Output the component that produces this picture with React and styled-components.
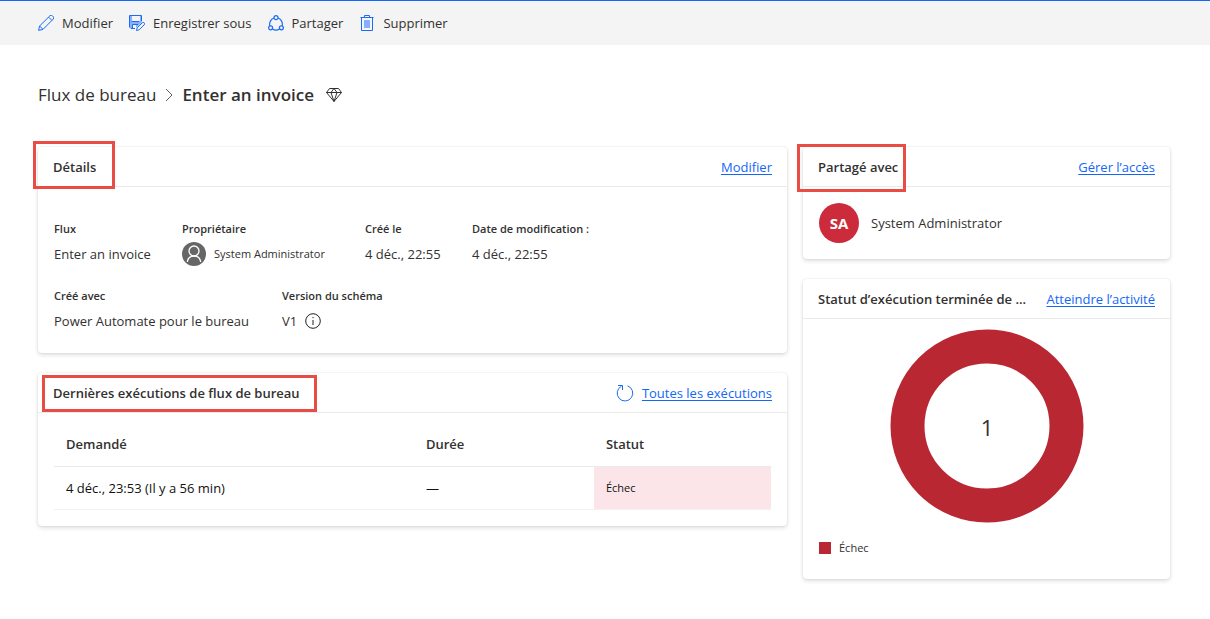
import React from "react";
import styled, { createGlobalStyle } from "styled-components";

const GlobalStyle = createGlobalStyle`
  *, *::before, *::after { box-sizing: border-box; }
  body {
    margin: 0;
    background: #fff;
    color: #323130;
    font-family: "Open Sans", "Noto Sans", sans-serif;
    font-size: 13px;
    line-height: 20px;
  }
`;

const Toolbar = styled.nav`
  display: flex;
  flex-wrap: wrap;
  align-items: center;
  gap: 16px;
  min-height: 45px;
  padding: 0 38px;
  border-top: 1px solid #1267f6;
  background: #f4f4f4;
`;

const ToolButton = styled.button`
  display: flex;
  align-items: center;
  gap: 8px;
  padding: 0;
  border: 0;
  background: none;
  color: inherit;
  font: inherit;
  cursor: pointer;
`;

const Icon = styled.svg`
  flex: none;
  width: ${(p) => p.$size || 16}px;
  height: ${(p) => p.$size || 16}px;
  fill: none;
  stroke: ${(p) => p.$color || "#1b6bf5"};
  stroke-linejoin: round;
`;

const Page = styled.main`
  padding: 36px 40px 40px 38px;
`;

const Breadcrumb = styled.div`
  display: flex;
  align-items: center;
  font-size: 17px;
  line-height: 28px;
`;

const Crumb = styled.a`
  color: inherit;
  text-decoration: none;
`;

const PageTitle = styled.h1`
  margin: 0 12px 0 0;
  font-size: inherit;
  font-weight: 600;
`;

const Separator = styled(Icon)`
  margin: 0 6px;
`;

const Columns = styled.div`
  display: grid;
  grid-template-columns: minmax(0, 749fr) minmax(0, 367fr);
  align-items: start;
  gap: 16px;
  margin-top: 38px;
`;

const Column = styled.div`
  display: grid;
  grid-template-columns: minmax(0, 1fr);
  gap: 20px;
`;

const Card = styled.section`
  position: relative;
  border-radius: 4px;
  background: #fff;
  box-shadow: 0 2px 4px rgba(0, 0, 0, 0.13), 0 0 2px rgba(0, 0, 0, 0.11);
`;

const CardHeader = styled.header`
  display: flex;
  align-items: center;
  justify-content: space-between;
  gap: 12px;
  height: 40px;
  padding: 0 15px;
  border-bottom: 1px solid #eaeaea;
`;

const CardTitle = styled.h2`
  min-width: 0;
  margin: 0;
  overflow: hidden;
  font-size: 13px;
  font-weight: 600;
  white-space: nowrap;
  text-overflow: ellipsis;
`;

const Link = styled.a`
  flex: none;
  color: #1267f6;
  text-decoration: underline;
  text-underline-offset: 2px;
`;

const HeaderActions = styled.div`
  display: flex;
  align-items: center;
  gap: 8px;
`;

const IconButton = styled.button`
  display: flex;
  padding: 0;
  border: 0;
  background: none;
  cursor: pointer;
`;

const Highlight = styled.div`
  position: absolute;
  top: ${(p) => p.$top}px;
  left: ${(p) => p.$left}px;
  width: ${(p) => p.$width}px;
  height: ${(p) => p.$height}px;
  border: 3px solid #e94b45;
  pointer-events: none;
`;

const Details = styled.div`
  display: grid;
  gap: 20px;
  padding: 32px 16px 20px;
`;

const FieldRow = styled.dl`
  display: flex;
  flex-wrap: wrap;
  gap: 16px 30px;
  margin: 0;
`;

const Field = styled.div`
  min-width: ${(p) => p.$width || 0}px;
`;

const FieldLabel = styled.dt`
  font-size: 11px;
  font-weight: 600;
`;

const FieldValue = styled.dd`
  display: flex;
  align-items: center;
  gap: 8px;
  min-height: 27px;
  margin: 0;
  padding-top: 3px;
`;

const SmallText = styled.span`
  font-size: 11px;
`;

const TableWrap = styled.div`
  padding: 9px 16px 16px;
`;

const Table = styled.table`
  width: 100%;
  border-collapse: collapse;
  table-layout: fixed;
`;

const HeadCell = styled.th`
  width: ${(p) => p.$width};
  height: 44px;
  padding: 0 12px;
  border-bottom: 1px solid #eaeaea;
  font-weight: 600;
  text-align: left;
`;

const Cell = styled.td`
  height: 43px;
  padding: 0 12px;
  border-bottom: 1px solid #f3f2f1;
  background: ${(p) => (p.$failed ? "#fbe5e8" : "none")};
  color: #111;
  font-size: ${(p) => (p.$failed ? 11 : 13)}px;
`;

const Person = styled.div`
  display: flex;
  align-items: center;
  gap: 12px;
  padding: 16px;
`;

const Avatar = styled.span`
  display: flex;
  align-items: center;
  justify-content: center;
  width: 40px;
  height: 40px;
  border-radius: 50%;
  background: #cc2b3b;
  color: #fff;
  font-size: 15px;
  font-weight: 700;
`;

const Chart = styled.svg`
  display: block;
  width: 194px;
  height: 194px;
  margin: 10px auto 0;
`;

const ChartValue = styled.text`
  fill: #323130;
  font-size: 22px;
  text-anchor: middle;
`;

const Legend = styled.div`
  display: flex;
  align-items: center;
  gap: 8px;
  padding: 15px 16px 21px;
  font-size: 11px;
`;

const Swatch = styled.span`
  width: 12px;
  height: 12px;
  background: #b92733;
`;

const PencilIcon = () => (
  <Icon viewBox="0 0 16 16" aria-hidden="true">
    <path d="M.6 15.4 1.6 11 11.8.9a1.8 1.8 0 0 1 2.7 0l.6.6a1.8 1.8 0 0 1 0 2.7L5 14.4zM10.6 2.1l3.3 3.3M1.6 11l3.4 3.4" />
  </Icon>
);

const SaveAsIcon = () => (
  <Icon viewBox="0 0 16 16" aria-hidden="true">
    <path d="M1 1h2v6h8V1h2v6L7 13V10H4v3H2l-1-1z" fill="#86b0fb" stroke="none" />
    <path d="M6 13.5H2L.5 12V.5h12V6M2.500 6.500h8M3.500 13V9.500H9" />
    <path d="m7.500 15.500.7-2.700 5-5a1.200 1.200 0 0 1 2 2l-5 5z" fill="#f4f4f4" />
  </Icon>
);

const ShareIcon = () => (
  <Icon viewBox="0 0 16 16" strokeWidth="1.200" aria-hidden="true">
    <circle cx="8" cy="2.700" r="2" />
    <circle cx="2.600" cy="12.800" r="2" />
    <circle cx="13.400" cy="12.800" r="2" />
    <path d="M6 3A6.700 6.700 0 0 0 1.800 10.800M10 3a6.700 6.700 0 0 1 4.200 7.800M4.400 14a6.700 6.700 0 0 0 7.200 0" />
  </Icon>
);

const TrashIcon = () => (
  <Icon viewBox="0 0 16 16" aria-hidden="true">
    <path d="M5 5h6v8H5z" fill="#86b0fb" stroke="none" />
    <path d="M1.500 2.500h13M5.500 2.500v-2h5v2M2.500 2.500v13h11v-13" />
  </Icon>
);

const DiamondIcon = () => (
  <Icon viewBox="0 0 16 16" $color="#323130" aria-hidden="true">
    <path d="M3.500 1.500h9l3 4L8 14.500.5 5.500zM.5 5.500h15M8 1.500l-3 4 3 9 3-9z" />
  </Icon>
);

const UserIcon = () => (
  <Icon viewBox="0 0 24 24" $size={24} $color="#fff" aria-hidden="true">
    <circle cx="12" cy="12" r="12" fill="#666" stroke="none" />
    <circle cx="12" cy="9" r="5" strokeWidth="1.300" />
    <path d="M5.300 20c.5-3.500 3.200-6 6.700-6s6.200 2.500 6.700 6" strokeWidth="1.300" />
  </Icon>
);

const InfoIcon = () => (
  <Icon viewBox="0 0 16 16" $color="#222" aria-hidden="true">
    <circle cx="8" cy="8" r="7.300" />
    <path d="M8 7v5M8 4v1.200" />
  </Icon>
);

const RefreshIcon = () => (
  <Icon viewBox="0 0 18 18" $size={18} aria-hidden="true">
    <path d="M11.500 1.800A7.800 7.800 0 1 1 5.500 2.200M2 1.500h4.500V6" />
  </Icon>
);

export default function App() {
  return (
    <>
      <GlobalStyle />
      <Toolbar aria-label="Actions">
        <ToolButton><PencilIcon />Modifier</ToolButton>
        <ToolButton><SaveAsIcon />Enregistrer sous</ToolButton>
        <ToolButton><ShareIcon />Partager</ToolButton>
        <ToolButton><TrashIcon />Supprimer</ToolButton>
      </Toolbar>
      <Page>
        <Breadcrumb>
          <Crumb href="#flux">Flux de bureau</Crumb>
          <Separator viewBox="0 0 14 14" $size={14} $color="#605e5c" aria-hidden="true">
            <path d="m4 1 6 6-6 6" />
          </Separator>
          <PageTitle>Enter an invoice</PageTitle>
          <DiamondIcon />
        </Breadcrumb>
        <Columns>
          <Column>
            <Card>
              <CardHeader>
                <CardTitle>Détails</CardTitle>
                <Link href="#modifier">Modifier</Link>
              </CardHeader>
              <Highlight $top={-6} $left={-5} $width={82} $height={48} />
              <Details>
                <FieldRow>
                  <Field $width={98}>
                    <FieldLabel>Flux</FieldLabel>
                    <FieldValue>Enter an invoice</FieldValue>
                  </Field>
                  <Field $width={153}>
                    <FieldLabel>Propriétaire</FieldLabel>
                    <FieldValue><UserIcon /><SmallText>System Administrator</SmallText></FieldValue>
                  </Field>
                  <Field $width={77}>
                    <FieldLabel>Créé le</FieldLabel>
                    <FieldValue>4 déc., 22:55</FieldValue>
                  </Field>
                  <Field>
                    <FieldLabel>Date de modification :</FieldLabel>
                    <FieldValue>4 déc., 22:55</FieldValue>
                  </Field>
                </FieldRow>
                <FieldRow>
                  <Field $width={198}>
                    <FieldLabel>Créé avec</FieldLabel>
                    <FieldValue>Power Automate pour le bureau</FieldValue>
                  </Field>
                  <Field>
                    <FieldLabel>Version du schéma</FieldLabel>
                    <FieldValue>V1 <InfoIcon /></FieldValue>
                  </Field>
                </FieldRow>
              </Details>
            </Card>
            <Card>
              <CardHeader>
                <CardTitle>Dernières exécutions de flux de bureau</CardTitle>
                <HeaderActions>
                  <IconButton aria-label="Actualiser"><RefreshIcon /></IconButton>
                  <Link href="#executions">Toutes les exécutions</Link>
                </HeaderActions>
              </CardHeader>
              <Highlight $top={2} $left={4} $width={275} $height={37} />
              <TableWrap>
                <Table>
                  <thead>
                    <tr>
                      <HeadCell $width="50.2%">Demandé</HeadCell>
                      <HeadCell $width="25.1%">Durée</HeadCell>
                      <HeadCell $width="24.7%">Statut</HeadCell>
                    </tr>
                  </thead>
                  <tbody>
                    <tr>
                      <Cell>4 déc., 23:53 (Il y a 56 min)</Cell>
                      <Cell>—</Cell>
                      <Cell $failed>Échec</Cell>
                    </tr>
                  </tbody>
                </Table>
              </TableWrap>
            </Card>
          </Column>
          <Column>
            <Card>
              <CardHeader>
                <CardTitle>Partagé avec</CardTitle>
                <Link href="#acces">Gérer l’accès</Link>
              </CardHeader>
              <Highlight $top={-3} $left={-6} $width={109} $height={48} />
              <Person><Avatar>SA</Avatar>System Administrator</Person>
            </Card>
            <Card>
              <CardHeader>
                <CardTitle>Statut d’exécution terminée de ...</CardTitle>
                <Link href="#activite">Atteindre l’activité</Link>
              </CardHeader>
              <Chart viewBox="0 0 194 194" role="img" aria-label="Échec : 1">
                <circle cx="97" cy="97" r="79.500" fill="none" stroke="#b92733" strokeWidth="34" />
                <ChartValue x="97" y="107">1</ChartValue>
              </Chart>
              <Legend><Swatch />Échec</Legend>
            </Card>
          </Column>
        </Columns>
      </Page>
    </>
  );
}
